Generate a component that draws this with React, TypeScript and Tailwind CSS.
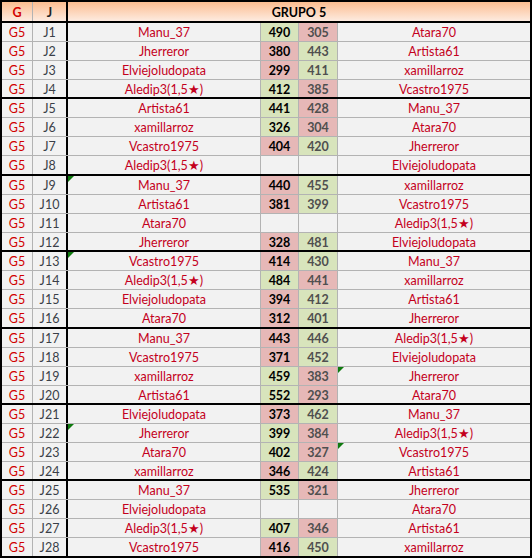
import React from "react";

type Row = {
  j: string;
  a: string;
  s1?: number;
  s2?: number;
  b: string;
  triA?: boolean;
  triB?: boolean;
};

const STAR = "Aledip3(1,5\u2605)";

const rows: Row[] = [
  { j: "J1", a: "Manu_37", s1: 490, s2: 305, b: "Atara70" },
  { j: "J2", a: "Jherreror", s1: 380, s2: 443, b: "Artista61" },
  { j: "J3", a: "Elviejoludopata", s1: 299, s2: 411, b: "xamillarroz" },
  { j: "J4", a: STAR, s1: 412, s2: 385, b: "Vcastro1975" },
  { j: "J5", a: "Artista61", s1: 441, s2: 428, b: "Manu_37" },
  { j: "J6", a: "xamillarroz", s1: 326, s2: 304, b: "Atara70" },
  { j: "J7", a: "Vcastro1975", s1: 404, s2: 420, b: "Jherreror" },
  { j: "J8", a: STAR, b: "Elviejoludopata" },
  { j: "J9", a: "Manu_37", s1: 440, s2: 455, b: "xamillarroz", triA: true },
  { j: "J10", a: "Artista61", s1: 381, s2: 399, b: "Vcastro1975" },
  { j: "J11", a: "Atara70", b: STAR },
  { j: "J12", a: "Jherreror", s1: 328, s2: 481, b: "Elviejoludopata" },
  { j: "J13", a: "Vcastro1975", s1: 414, s2: 430, b: "Manu_37", triA: true },
  { j: "J14", a: STAR, s1: 484, s2: 441, b: "xamillarroz" },
  { j: "J15", a: "Elviejoludopata", s1: 394, s2: 412, b: "Artista61" },
  { j: "J16", a: "Atara70", s1: 312, s2: 401, b: "Jherreror" },
  { j: "J17", a: "Manu_37", s1: 443, s2: 446, b: STAR },
  { j: "J18", a: "Vcastro1975", s1: 371, s2: 452, b: "Elviejoludopata" },
  { j: "J19", a: "xamillarroz", s1: 459, s2: 383, b: "Jherreror", triB: true },
  { j: "J20", a: "Artista61", s1: 552, s2: 293, b: "Atara70" },
  { j: "J21", a: "Elviejoludopata", s1: 373, s2: 462, b: "Manu_37" },
  { j: "J22", a: "Jherreror", s1: 399, s2: 384, b: STAR, triA: true },
  { j: "J23", a: "Atara70", s1: 402, s2: 327, b: "Vcastro1975", triB: true },
  { j: "J24", a: "xamillarroz", s1: 346, s2: 424, b: "Artista61" },
  { j: "J25", a: "Manu_37", s1: 535, s2: 321, b: "Jherreror" },
  { j: "J26", a: "Elviejoludopata", b: "Atara70" },
  { j: "J27", a: STAR, s1: 407, s2: 346, b: "Artista61" },
  { j: "J28", a: "Vcastro1975", s1: 416, s2: 450, b: "xamillarroz" },
];

const Tri = () => (
  <svg className="absolute left-0 top-0" width="6" height="6" viewBox="0 0 6 6">
    <polygon points="0,0 6,0 0,6" fill="#0f7a0f" />
  </svg>
);

function rowClass(i: number): string {
  if (i === 27) return "h-[18px]";
  const n = i + 1;
  if (n % 4 !== 0) return "h-[19px] border-b border-[#b3b3b3]";
  if (n === 8 || n === 16) return "h-[20px] border-b-2 border-black";
  return "h-[19px] border-b-2 border-black";
}

function scoreBg(v: number | undefined, o: number | undefined): string {
  if (v === undefined || o === undefined) return "";
  return v > o ? "bg-[#d8e4bc]" : "bg-[#e6b8b7]";
}

export default function App() {
  return (
    <div className="w-[532px] h-[558px] border-2 border-black bg-[#f2f2f2] font-['Lato',sans-serif] text-[12.5px] leading-none overflow-hidden">
      <div className="flex h-[21px] border-b-2 border-black bg-linear-to-b from-[#fbbd90] to-[#fdebe0]">
        <div className="w-[31px] shrink-0 border-r border-[#b3b3b3] flex items-center justify-center pt-[3px] font-bold text-[#d10000]">
          G
        </div>
        <div className="w-[35px] shrink-0 border-r-2 border-black flex items-center justify-center pt-[3px] font-bold text-[#222]">
          J
        </div>
        <div className="flex-1 flex items-center justify-center pt-[3px] font-bold text-black">
          GRUPO 5
        </div>
      </div>
      {rows.map((r, i) => (
        <div key={r.j} className={`flex ${rowClass(i)}`}>
          <div className="w-[31px] shrink-0 border-r border-[#b3b3b3] flex items-center justify-center pt-[3px] text-[#d10000]">
            G5
          </div>
          <div className="w-[35px] shrink-0 border-r-2 border-black flex items-center justify-center pt-[3px] text-[#3a3f48]">
            {r.j}
          </div>
          <div className="relative w-[193px] shrink-0 border-r border-[#b3b3b3] flex items-center justify-center pt-[3px] text-[#c4001c]">
            {r.triA && <Tri />}
            {r.a}
          </div>
          <div
            className={`w-[38px] shrink-0 border-r border-[#b3b3b3] flex items-center justify-center pt-[3px] font-bold text-black ${scoreBg(r.s1, r.s2)}`}
          >
            {r.s1 ?? ""}
          </div>
          <div
            className={`w-[39px] shrink-0 border-r border-[#b3b3b3] flex items-center justify-center pt-[3px] font-bold text-[#4f4f4f] ${scoreBg(r.s2, r.s1)}`}
          >
            {r.s2 ?? ""}
          </div>
          <div className="relative flex-1 flex items-center justify-center pt-[3px] text-[#c4001c]">
            {r.triB && <Tri />}
            {r.b}
          </div>
        </div>
      ))}
    </div>
  );
}
